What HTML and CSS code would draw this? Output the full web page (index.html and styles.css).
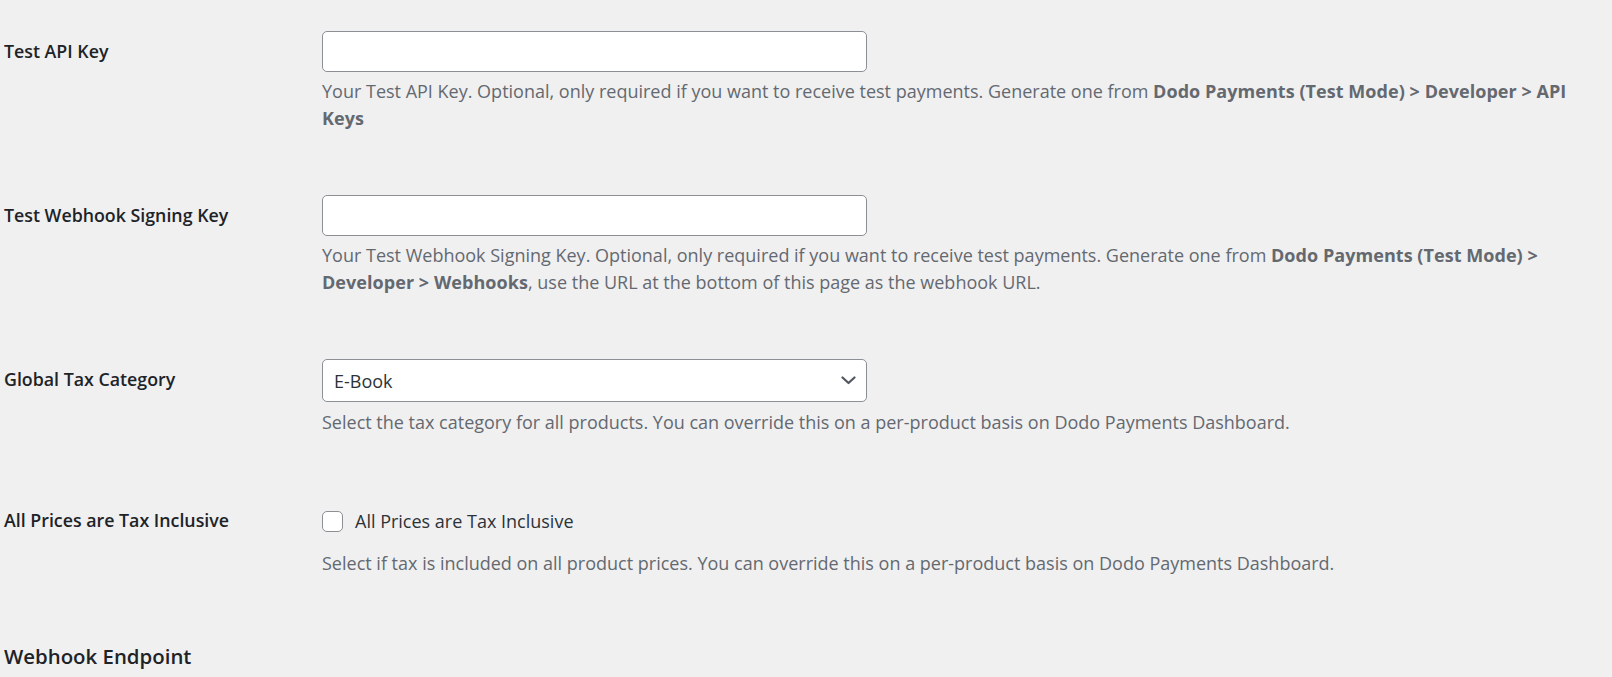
FILE: index.html
```html
<!DOCTYPE html>
<html lang="en">
<head>
<meta charset="utf-8">
<title>Dodo Payments Settings</title>
<link rel="stylesheet" href="styles.css">
</head>
<body>
<div class="page">
  <div class="form-table">
    <div class="row">
      <div class="th"><label class="label" for="test_api_key">Test API Key</label></div>
      <div class="td">
        <input class="text-input" type="text" id="test_api_key">
        <p class="description">Your Test API Key. Optional, only required if you want to receive test payments. Generate one from <b>Dodo Payments (Test Mode) &gt; Developer &gt; API Keys</b></p>
      </div>
    </div>
    <div class="row">
      <div class="th"><label class="label" for="test_webhook_key">Test Webhook Signing Key</label></div>
      <div class="td">
        <input class="text-input" type="text" id="test_webhook_key">
        <p class="description">Your Test Webhook Signing Key. Optional, only required if you want to receive test payments. Generate one from <b>Dodo Payments (Test Mode) &gt; Developer &gt; Webhooks</b>, use the URL at the bottom of this page as the webhook URL.</p>
      </div>
    </div>
    <div class="row">
      <div class="th"><label class="label" for="tax_category">Global Tax Category</label></div>
      <div class="td">
        <div class="select-wrap">
          <select class="select" id="tax_category">
            <option>E-Book</option>
          </select>
          <svg class="chevron" width="15" height="9" viewBox="0 0 15 9"><path d="M1.5 1.5 L7.5 7 L13.5 1.5" fill="none" stroke="#50575e" stroke-width="2.2" stroke-linecap="round" stroke-linejoin="round"/></svg>
        </div>
        <p class="description desc-select">Select the tax category for all products. You can override this on a per-product basis on Dodo Payments Dashboard.</p>
      </div>
    </div>
    <div class="row">
      <div class="th"><label class="label" for="tax_inclusive">All Prices are Tax Inclusive</label></div>
      <div class="td">
        <label class="check-label"><input class="checkbox" type="checkbox" id="tax_inclusive"> All Prices are Tax Inclusive</label>
        <p class="description desc-check">Select if tax is included on all product prices. You can override this on a per-product basis on Dodo Payments Dashboard.</p>
      </div>
    </div>
  </div>
  <h2 class="section-title">Webhook Endpoint</h2>
</div>
</body>
</html>
```
FILE: styles.css
```css
html, body {
  margin: 0;
  padding: 0;
  background: #f0f0f1;
}
body {
  font-family: "Segoe UI", "Open Sans", "Noto Sans", sans-serif;
  color: #1d2327;
  font-size: 18px;
}
.page {
  padding-left: 4px;
}
.form-table {
  display: flex;
  flex-direction: column;
}
.row {
  display: flex;
  padding: 31px 0 32.7px;
}
.th {
  width: 318px;
  flex: none;
  padding-top: 8px;
}
.label {
  font-weight: 600;
  line-height: 23px;
  font-size: 17.8px;
}
.td {
  width: 1255px;
}
.text-input {
  display: block;
  box-sizing: border-box;
  width: 545px;
  height: 41px;
  margin: 0;
  padding: 0 10px;
  border: 1px solid #8c8f94;
  border-radius: 5px;
  background: #fff;
  font: inherit;
  color: #2c3338;
}
.description {
  margin: 6px 0 0;
  color: #646970;
  line-height: 26.7px;
}
.description b {
  font-weight: 700;
  letter-spacing: 0.05px;
}
.select-wrap {
  position: relative;
  width: 545px;
}
.select {
  display: block;
  box-sizing: border-box;
  width: 545px;
  height: 43px;
  margin: 0;
  padding: 0 40px 0 11px;
  border: 1px solid #8c8f94;
  border-radius: 5px;
  background: #fff;
  font: inherit;
  color: #2c3338;
  appearance: none;
  -webkit-appearance: none;
}
.chevron {
  position: absolute;
  right: 11px;
  top: 17px;
  pointer-events: none;
}
.desc-select {
  margin-top: 7px;
}
.check-label {
  display: flex;
  align-items: center;
  gap: 12px;
  margin-top: 8px;
  line-height: 27px;
  color: #2c3338;
}
.checkbox {
  appearance: none;
  -webkit-appearance: none;
  box-sizing: border-box;
  width: 21px;
  height: 21px;
  margin: 0;
  border: 1px solid #8c8f94;
  border-radius: 5px;
  background: #fff;
}
.desc-check {
  margin-top: 15px;
}
.section-title {
  margin: 0;
  padding-top: 33px;
  font-size: 20.4px;
  font-weight: 600;
  line-height: 28px;
  color: #1d2327;
}
```
